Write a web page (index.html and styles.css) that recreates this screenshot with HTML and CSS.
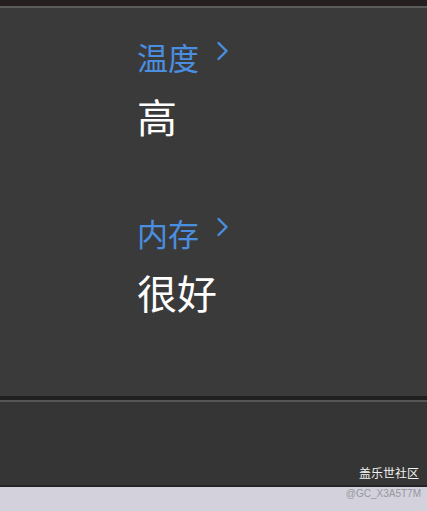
FILE: index.html
```html
<!DOCTYPE html>
<html lang="zh">
<head>
    <meta charset="UTF-8">
    <meta name="viewport" content="width=device-width, initial-scale=1.0">
    <title>设备状态</title>
    <link rel="stylesheet" href="styles.css">
</head>
<body>
    <div class="top-strip"></div>

    <!-- Status panel -->
    <main class="panel">
        <div class="item">
            <div class="label">温度
                <svg class="chev" width="13" height="20" viewBox="0 0 13 20"><path d="M2.5 2 L10.5 10 L2.5 18" fill="none" stroke="#4a8ee0" stroke-width="2.4" stroke-linecap="round" stroke-linejoin="round"/></svg>
            </div>
            <div class="value">高</div>
        </div>
        <div class="item">
            <div class="label">内存
                <svg class="chev" width="13" height="20" viewBox="0 0 13 20"><path d="M2.5 2 L10.5 10 L2.5 18" fill="none" stroke="#4a8ee0" stroke-width="2.4" stroke-linecap="round" stroke-linejoin="round"/></svg>
            </div>
            <div class="value">很好</div>
        </div>
    </main>

    <div class="bar">
        <span class="brand">盖乐世社区</span>
    </div>
    <div class="footer">
        <span class="user">@GC_X3A5T7M</span>
    </div>
</body>
</html>
```

FILE: styles.css
```css
* {
    margin: 0;
    padding: 0;
    box-sizing: border-box;
}

body {
    width: 427px;
    height: 511px;
    overflow: hidden;
    background-color: #383838;
    font-family: "Noto Sans CJK SC", "Noto Sans", sans-serif;
    display: flex;
    flex-direction: column;
}

.top-strip {
    flex: none;
    height: 8px;
    background-color: #261f1f;
    border-bottom: 2px solid #5c5b5b;
}

/* Status panel */
.panel {
    flex: none;
    height: 392px;
    background-color: #3a3a3a;
    padding: 29px 0 0 137px;
    border-bottom: 4px solid #202020;
}

.item {
    margin-bottom: 72px;
}

.label {
    color: #4a8ee0;
    font-size: 31px;
    line-height: 40px;
    display: flex;
    align-items: center;
}

.chev {
    margin-left: 17px;
    margin-top: -12px;
}

.value {
    color: #ffffff;
    font-size: 40px;
    line-height: 50px;
    margin-top: 14px;
}

.bar {
    flex: none;
    height: 87px;
    background-color: #353535;
    border-top: 2px solid #555555;
    border-bottom: 2px solid #252525;
    display: flex;
    justify-content: flex-end;
    align-items: flex-end;
    padding: 0 8px 5px 0;
}

.brand {
    color: #f2f2f2;
    font-size: 12px;
    line-height: 14px;
}

.footer {
    flex: 1;
    background-color: #d3d2dc;
    display: flex;
    justify-content: flex-end;
    padding: 1px 6px 0 0;
}

.user {
    color: #96969e;
    font-family: "Liberation Sans", sans-serif;
    font-size: 10px;
    line-height: 12px;
}
```
